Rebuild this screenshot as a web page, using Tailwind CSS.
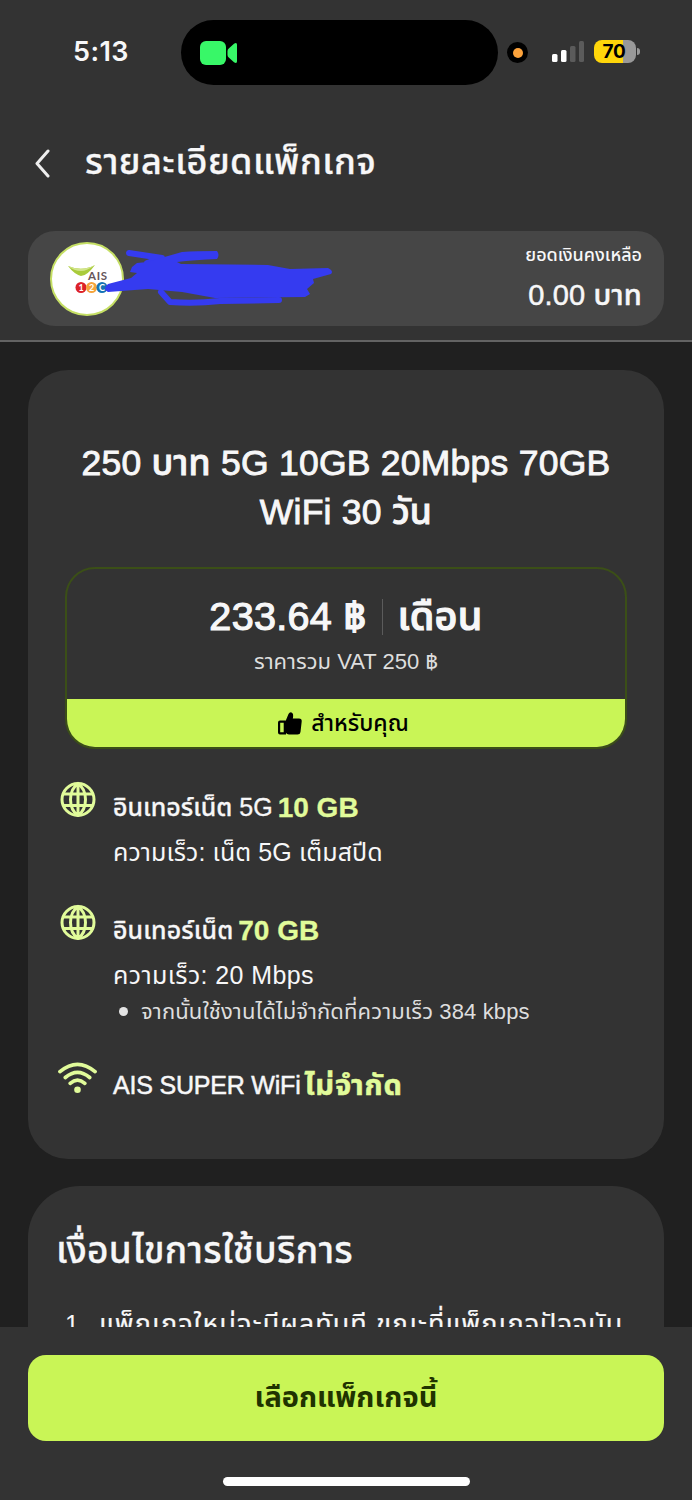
<!DOCTYPE html>
<html lang="th">
<head>
<meta charset="utf-8">
<title>รายละเอียดแพ็กเกจ</title>
<script src="https://cdn.jsdelivr.net/npm/@tailwindcss/browser@4"></script>
</head>
<body class="w-[692px] h-[1500px] overflow-hidden bg-[#202020] flex flex-col text-[#f7f7f8] whitespace-nowrap font-['Liberation_Sans','Noto_Sans_Thai',sans-serif]">
<header class="h-[342px] shrink-0 bg-[#333333] border-b-2 border-[#636363] flex flex-col">
  <div class="h-[104px] pt-5 flex items-start">
    <div class="w-[181px] h-16 flex items-center pl-[73px] font-['Inter',sans-serif] font-semibold text-[27px] tracking-[0.4px]">5:13</div>
    <div class="w-[317px] h-[65px] rounded-full bg-black flex items-center pl-[19px]">
      <svg class="w-[38px] h-6" viewBox="0 0 38 24" fill="#38f768"><rect x="0" y="0" width="26" height="24" rx="6"/><path d="M27.5 10Q27.500 8.500 29 7.200L34 2.800Q37 1 37 3.800V20.200Q37 23 34 21.200L29 16.800Q27.500 15.500 27.500 14Z"/></svg>
    </div>
    <div class="ml-[9px] mt-[22px] size-[21px] rounded-full bg-black flex items-center justify-center"><div class="size-[10px] rounded-full bg-[#fda33c]"></div></div>
    <svg class="ml-[24px] mt-[21px] w-8 h-[21px]" viewBox="0 0 32 21"><rect y="13" width="5.500" height="8" rx="1.500" fill="#fff"/><rect x="9" y="9" width="5.500" height="12" rx="1.500" fill="#fff"/><rect x="18" y="5" width="5.500" height="16" rx="1.500" fill="#5b5b5b"/><rect x="27" y="0" width="5" height="21" rx="1.500" fill="#5b5b5b"/></svg>
    <div class="ml-[10px] mt-5 w-[42px] h-[23px] rounded-[8px] bg-linear-to-r from-[#ffd60a] from-70% to-[#999999] to-70% flex items-center justify-center pr-[2px] font-['Inter',sans-serif] font-bold text-[19px] text-black leading-none tracking-[-0.3px]">70</div>
    <div class="ml-px mt-[28px] w-[3px] h-[7px] rounded-r-full bg-[#999999]"></div>
  </div>
  <div class="h-[127px] flex items-start pt-[45px]">
    <svg class="ml-[35px] w-[15px] h-[29px]" viewBox="0 0 15 29" fill="none" stroke="#eeeeee" stroke-width="3" stroke-linecap="round" stroke-linejoin="round"><path d="M13 2 2 14.500 13 27"/></svg>
    <h1 class="ml-[35px] -mt-[12px] text-[36px] leading-[50px] font-medium tracking-[0.5px] [-webkit-text-stroke:0.3px]">รายละเอียดแพ็กเกจ</h1>
  </div>
  <div class="relative mx-7 h-[95px] rounded-[27px] bg-[#464646] flex items-center justify-between px-[22px]">
    <svg class="size-[74px]" viewBox="0 0 74 74">
      <circle cx="37" cy="37" r="36" fill="#fff" stroke="#c5df64" stroke-width="2"/>
      <path d="M18 24Q32 30 45 23Q37 34 31 34Q24 32 18 24Z" fill="#a9cb3b"/>
      <path d="M18 24Q32 30 45 23Q37 29 31 29Q24 29 18 24Z" fill="#d3e58c"/>
      <text x="38" y="37.500" font-size="11.500" font-weight="bold" textLength="19" font-family="Lato" fill="#66565b">AIS</text>
      <circle cx="31" cy="45.500" r="5.500" fill="#dc2229"/><circle cx="41.500" cy="45.500" r="5.500" fill="#f4a33c"/><circle cx="52" cy="45.500" r="5.500" fill="#1472b4"/>
      <g font-family="Lato" font-weight="bold" font-size="9" fill="#fff" text-anchor="middle"><text x="31" y="48.500">1</text><text x="41.500" y="48.500">2</text><text x="52" y="48.500">C</text></g>
    </svg>
    <svg class="absolute left-0 top-0 w-[320px] h-[95px]" viewBox="28 231 320 95">
      <g fill="none" stroke="#353bf0" stroke-width="6" stroke-linecap="round" stroke-linejoin="round"><path d="M129 253 162 258 147 263"/><path d="M161 292 170 302Q195 304 220 301L279 300"/></g>
      <path d="M147 262 182 252Q196 251 217 251Q220 255 217 259Q195 260 177 262L181 264 268 265 290 269 328 268Q334 271 331 274L313 279 314 283 307 289 310 294 305 297 215 298 182 292 148 289 108 292Q102 289 108 284L131 278 137 273 130 272 132 267 137 263Z" fill="#353bf0"/>
    </svg>
    <div class="h-full flex flex-col items-end pt-[9px]">
      <div class="text-[18px] leading-[30px] font-medium">ยอดเงินคงเหลือ</div>
      <div class="mt-[5px] text-[29px] leading-[40px] font-medium tracking-[0.2px] [-webkit-text-stroke:0.5px]">0.00 บาท</div>
    </div>
  </div>
</header>
<main class="h-[985px] shrink-0 overflow-hidden px-7 pt-7">
  <section class="h-[789px] rounded-[40px] bg-[#333333] pt-[69px]">
    <h2 class="text-center text-[35.5px] leading-[49px] font-medium tracking-[0.25px] [-webkit-text-stroke:0.9px]">250 บาท 5G 10GB 20Mbps 70GB<br>WiFi 30 วัน</h2>
    <div class="mx-[37px] mt-[30px] h-[182px] rounded-[30px] border-2 border-[#3b4f17] overflow-hidden flex flex-col">
      <div class="h-[130px] pt-[23px]">
        <div class="h-[50px] flex items-center justify-center text-[39.5px] font-medium tracking-[0.3px] [-webkit-text-stroke:1.2px]"><span>233.64 ฿</span><span class="mx-[15px] w-px h-9 bg-[#5b5b5b]"></span><span>เดือน</span></div>
        <div class="mt-[4px] text-center text-[22px] leading-8 text-[#dedede]">ราคารวม VAT 250 ฿</div>
      </div>
      <div class="h-[48px] pr-[5px] bg-[#c9f556] text-black flex items-center justify-center gap-[9px] text-[23px] font-medium">
        <svg class="w-6 h-[23px]" viewBox="0 0 24 23" fill="currentColor"><path d="M8 8 10.500 2Q11.500 0 13.500 .4 16 1.500 14.800 6.500H21Q24 6.500 23.700 9.500L22.500 20Q22.200 22.500 19.500 22.500H11Q9 22.500 7.500 20.500Z"/><path fill-rule="evenodd" d="M2 8.500H8V22.500H2Q0 22.500 0 20.500V10.500Q0 8.500 2 8.500ZM2.200 10.700V20.300H5.700V10.700Z"/></svg>
        <span>สำหรับคุณ</span>
      </div>
    </div>
    <div class="mt-[32px] pl-8 flex flex-col">
      <div class="h-[123px] flex">
        <svg class="size-9 shrink-0" viewBox="0 0 36 36" fill="none" stroke="#e1fb9a" stroke-width="3"><circle cx="18" cy="18.500" r="16"/><path d="M18 2.500C8 9.500 8 27.500 18 34.500C28 27.500 28 9.500 18 2.500ZM18 2.500V34.500M3.500 13H32.500M3.500 24.500H32.500"/></svg>
        <div class="ml-[17px] pt-[7px]">
          <div class="flex items-center gap-[5px] h-10 text-[25px] font-medium [-webkit-text-stroke:0.3px]"><span>อินเทอร์เน็ต 5G</span><b class="text-[28px] text-[#e1fb9a]">10 GB</b></div>
          <div class="mt-[4px] text-[25px] leading-10 tracking-[0.1px]">ความเร็ว: เน็ต 5G เต็มสปีด</div>
        </div>
      </div>
      <div class="h-[157px] flex">
        <svg class="size-9 shrink-0" viewBox="0 0 36 36" fill="none" stroke="#e1fb9a" stroke-width="3"><circle cx="18" cy="18.500" r="16"/><path d="M18 2.500C8 9.500 8 27.500 18 34.500C28 27.500 28 9.500 18 2.500ZM18 2.500V34.500M3.500 13H32.500M3.500 24.500H32.500"/></svg>
        <div class="ml-[17px] pt-[7px]">
          <div class="flex items-center gap-[5px] h-10 text-[25px] font-medium tracking-[0.1px] [-webkit-text-stroke:0.3px]"><span>อินเทอร์เน็ต</span><b class="text-[28px] tracking-normal text-[#e1fb9a]">70 GB</b></div>
          <div class="mt-[4px] text-[25px] leading-10 tracking-[0.4px]">ความเร็ว: 20 Mbps</div>
          <div class="h-8 flex items-center text-[22px] tracking-[0.13px] text-[#dedede]"><i class="ml-[6px] mr-[13px] size-[9px] rounded-full bg-[#e4e4e4]"></i><span>จากนั้นใช้งานได้ไม่จำกัดที่ความเร็ว 384 kbps</span></div>
        </div>
      </div>
      <div class="flex">
        <svg class="-ml-[2px] mt-px w-[39px] h-8 shrink-0" viewBox="0 0 40 32" fill="none" stroke="#e1fb9a" stroke-width="3.800" stroke-linecap="round"><path d="M2 9.500Q20-5.500 38 9.500M7.500 15.500Q20 5 32.500 15.500M12.500 21.500Q20 15 27.500 21.500"/><circle cx="20" cy="28" r="3.400" fill="#e1fb9a" stroke="none"/></svg>
        <div class="ml-[16px] pt-[6px] flex items-center gap-[4px] h-[44px] text-[25px] font-medium tracking-[-0.2px] [-webkit-text-stroke:0.5px]"><span>AIS SUPER WiFi</span><b class="text-[29px] tracking-[0.8px] text-[#e1fb9a]">ไม่จำกัด</b></div>
      </div>
    </div>
  </section>
  <section class="mt-[27px] h-[300px] rounded-t-[52px] bg-[#333333] pt-[38px] px-[28px]">
    <h2 class="text-[37px] leading-[54px] font-medium tracking-[0.35px] [-webkit-text-stroke:0.3px]">เงื่อนไขการใช้บริการ</h2>
    <div class="mt-[26px] flex text-[27px] leading-10"><span class="w-[43px] pl-[9px] text-[25px]">1.</span><span class="tracking-[1.05px] [-webkit-text-stroke:0.2px]">แพ็กเกจใหม่จะมีผลทันที ขณะที่แพ็กเกจปัจจุบัน</span></div>
  </section>
</main>
<footer class="h-[173px] shrink-0 bg-[#333333] px-7 pt-7 flex flex-col items-center">
  <button class="w-full h-[86px] rounded-[18px] bg-[#c9f556] text-[#1f3300] text-[29px] font-bold"><span>เลือกแพ็กเกจนี้</span></button>
  <div class="mt-[36px] w-[247px] h-[9px] rounded-full bg-white"></div>
</footer>
</body>
</html>
